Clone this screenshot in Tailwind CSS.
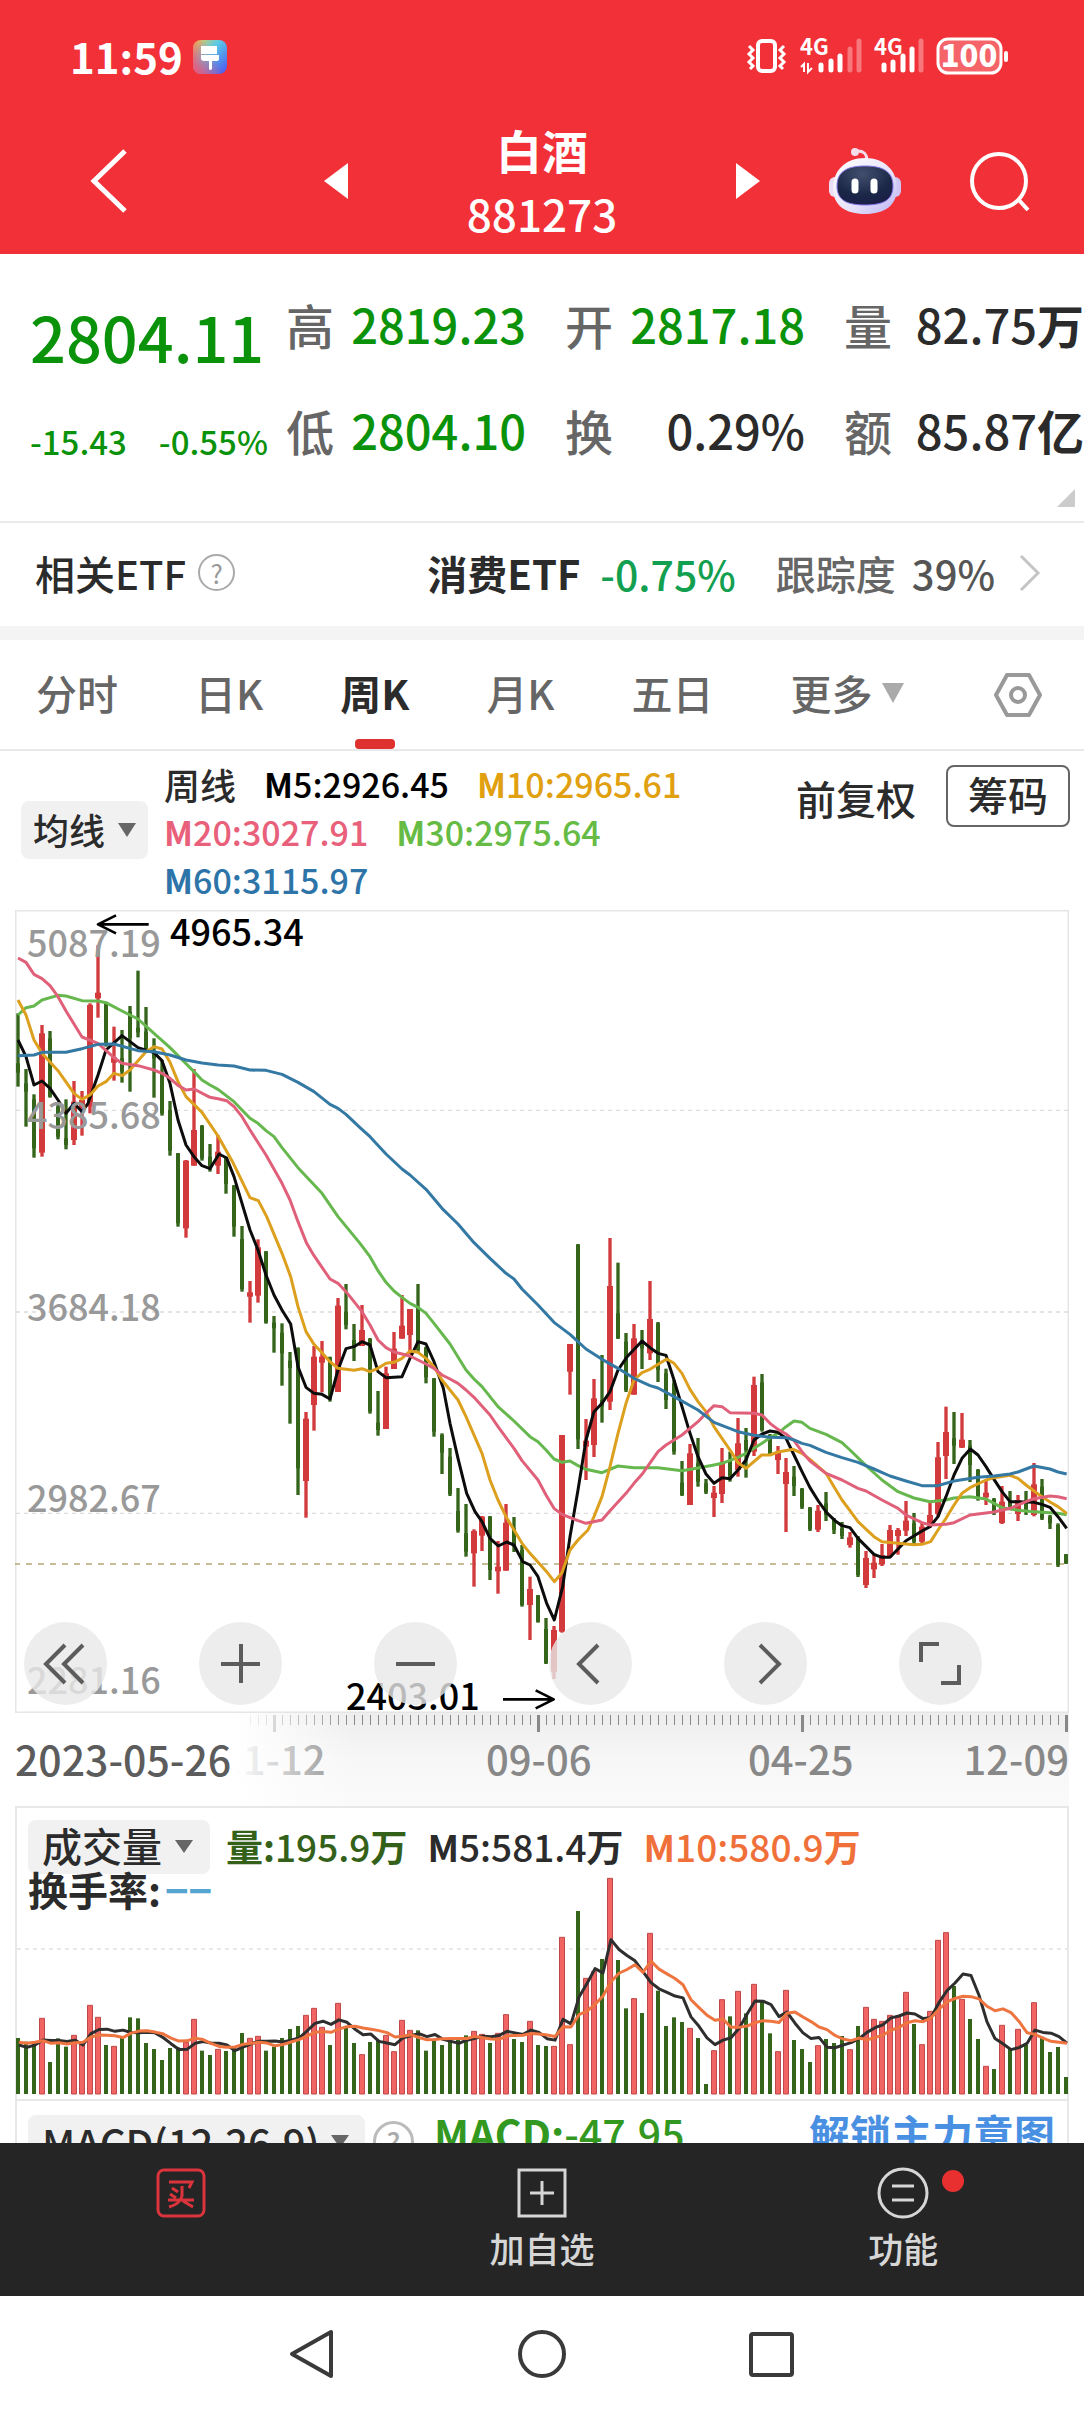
<!DOCTYPE html>
<html lang="zh-CN">
<head>
  <meta charset="UTF-8">
  <meta name="viewport" content="width=device-width, initial-scale=1">
  <title>白酒 881273</title>
  <script src="https://cdn.jsdelivr.net/npm/@tailwindcss/browser@4"></script>
</head>
<body class="h-screen flex flex-col overflow-hidden bg-white text-[#2b2b2b] font-['Noto_Sans_CJK_SC',sans-serif] font-medium">

  <!-- Header -->
  <header class="shrink-0 bg-[#f23037] text-white">
    <div class="h-[114px] flex items-center justify-between pl-[70px] pr-[74px]">
      <div class="flex items-center gap-[10px]">
        <span class="pb-[3px] text-[42px] leading-[48px] font-bold">11:59</span>
        <svg class="w-[34px] h-[34px]" viewBox="0 0 34 34">
          <defs>
            <linearGradient id="brush" x1="0" y1="0" x2="1" y2="1">
              <stop offset="0" stop-color="#ffc83a"/><stop offset=".4" stop-color="#5ccbe8"/><stop offset="1" stop-color="#4a50f0"/>
            </linearGradient>
            <linearGradient id="brush2" x1="0" y1="1" x2="1" y2=".4">
              <stop offset="0" stop-color="#ff4a6a"/><stop offset=".7" stop-color="#ff4a6a" stop-opacity="0"/>
            </linearGradient>
          </defs>
          <rect width="34" height="34" rx="8" fill="url(#brush)"/>
          <rect width="34" height="34" rx="8" fill="url(#brush2)"/>
          <path d="M8 6h16v8H8zM8 15h18v4q0 2-3 2h-4v8q-2 2-3 0v-8h-5q-3 0-3-3z" fill="#fff"/>
        </svg>
      </div>
      <svg class="w-[264px] h-[38px] overflow-visible" viewBox="0 0 264 38" fill="none" stroke="#fff" font-family="Noto Sans CJK SC">
        <!-- vibrate -->
        <rect x="12" y="3" width="17" height="30" rx="4" stroke-width="4"/>
        <path d="M3 8l4 4-4 4 4 4-4 4 4 4-3 3M38 8l-4 4 4 4-4 4 4 4-4 4 3 3" stroke-width="3"/>
        <!-- signal 1 -->
        <text x="54" y="17" font-size="22" font-weight="700" fill="#fff" stroke="none">4G</text>
        <path d="M58 34v-8l-3 3M62 25v9l4-4" stroke-width="2"/>
        <g stroke-width="5" stroke-linecap="round">
          <path d="M75 32v-5M85 32v-9M94 32V18"/>
          <path d="M104 32V11M113 32V3" opacity=".35"/>
        </g>
        <!-- signal 2 -->
        <text x="128" y="17" font-size="22" font-weight="700" fill="#fff" stroke="none">4G</text>
        <g stroke-width="5" stroke-linecap="round">
          <path d="M138 32v-5M147 32v-8M157 32V18M166 32V11"/>
          <path d="M175 32V3" opacity=".35"/>
        </g>
        <!-- battery -->
        <rect x="192" y="1" width="63" height="34" rx="10" fill="#fff" fill-opacity=".25" stroke-width="3"/>
        <path d="M260 15v7" stroke-width="4" stroke-linecap="round"/>
        <text x="223" y="29" font-size="31" font-weight="900" fill="#fff" stroke="none" text-anchor="middle">100</text>
      </svg>
    </div>

    <div class="h-[140px] pb-[6px] grid grid-cols-[1fr_436px_1fr] items-center">
      <button class="ml-[90px] w-[38px] h-[64px]" aria-label="返回">
        <svg viewBox="0 0 38 64" fill="none" stroke="#fff" stroke-width="5"><path d="M35 2L4 32l31 30"/></svg>
      </button>
      <div class="flex items-center justify-between">
        <button aria-label="上一个"><svg class="w-6 h-9" viewBox="0 0 24 36" fill="#fff"><path d="M24 0v36L0 18z"/></svg></button>
        <h1 class="text-center">
          <span class="block text-[46px] leading-[64px] font-bold">白酒</span>
          <span class="block text-[44px] leading-[64px]">881273</span>
        </h1>
        <button aria-label="下一个"><svg class="w-6 h-9" viewBox="0 0 24 36" fill="#fff"><path d="M0 0v36l24-18z"/></svg></button>
      </div>
      <div class="flex items-center justify-between pl-[69px] pr-[54px]">
        <button aria-label="智能助手">
          <svg class="w-[72px] h-[68px]" viewBox="0 0 72 68">
            <defs>
              <linearGradient id="shell" x1="0" y1="0" x2="1" y2="1">
                <stop offset="0" stop-color="#fff"/><stop offset=".6" stop-color="#e6e2fb"/><stop offset="1" stop-color="#b9b2f3"/>
              </linearGradient>
              <radialGradient id="face" cx=".45" cy=".2" r=".9">
                <stop offset="0" stop-color="#42506e"/><stop offset=".6" stop-color="#1b2747"/><stop offset="1" stop-color="#1a1c48"/>
              </radialGradient>
            </defs>
            <path d="M27 4q11-1 11 10" fill="none" stroke="#f6dcea" stroke-width="3"/>
            <circle cx="26" cy="5" r="4" fill="#f6dcea"/>
            <rect x="0" y="30" width="12" height="20" rx="6" fill="#ecdcf4"/>
            <rect x="60" y="30" width="12" height="20" rx="6" fill="#cfc6f5"/>
            <path d="M36 11c20 0 32 13 32 30S56 67 36 67 4 58 4 41 16 11 36 11z" fill="url(#shell)"/>
            <path d="M36 19c17 0 28 5 28 20 0 13-8 19-28 19S8 52 8 39c0-15 11-20 28-20z" fill="url(#face)" stroke="#8576e8" stroke-width="1"/>
            <path d="M26 35v8M45 35v8" stroke="#fff" stroke-width="7" stroke-linecap="round"/>
          </svg>
        </button>
        <button aria-label="搜索">
          <svg class="w-[60px] h-[60px]" viewBox="0 0 60 60" fill="none" stroke="#fff" stroke-width="4"><circle cx="29" cy="30" r="27"/><path d="M48 48l10 11"/></svg>
        </button>
      </div>
    </div>
  </header>

  <main class="flex-1 min-h-0 overflow-hidden">

    <!-- Quote -->
    <section class="relative h-[269px] pt-[41px] flex pl-[30px] border-b-2 border-[#ebebeb] whitespace-nowrap">
      <div class="w-[256px] text-[#0a920a]">
        <div class="h-[82px] text-[63px] leading-[82px]">2804.11</div>
        <div class="pt-[46px] flex gap-8 text-[33px] leading-[36px]"><span>-15.43</span><span>-0.55%</span></div>
      </div>
      <dl class="flex-1 grid grid-cols-3 gap-x-[39px] content-start text-[47px] leading-[58px] [&_dt]:text-[48px]">
        <div class="h-[106px] flex justify-between"><dt class="text-[#666]">高</dt><dd class="text-[#0a920a]">2819.23</dd></div>
        <div class="h-[106px] flex justify-between"><dt class="text-[#666]">开</dt><dd class="text-[#0a920a]">2817.18</dd></div>
        <div class="h-[106px] flex justify-between"><dt class="text-[#666]">量</dt><dd>82.75<b>万</b></dd></div>
        <div class="flex justify-between"><dt class="text-[#666]">低</dt><dd class="text-[#0a920a]">2804.10</dd></div>
        <div class="flex justify-between"><dt class="text-[#666]">换</dt><dd>0.29%</dd></div>
        <div class="flex justify-between"><dt class="text-[#666]">额</dt><dd>85.87<b>亿</b></dd></div>
      </dl>
      <svg class="absolute right-[9px] bottom-[14px] w-[18px] h-[18px]" viewBox="0 0 18 18" fill="#ccc"><path d="M18 0v18H0z"/></svg>
    </section>

    <!-- ETF -->
    <section class="h-[103px] pb-[4px] flex items-center pl-[35px] pr-[43px] text-[40px] leading-[58px] whitespace-nowrap">
      <span>相关ETF</span>
      <button class="ml-3 w-[37px] h-[37px] rounded-full border-2 border-[#aaa] text-[#999] text-[26px] leading-[32px] font-normal" aria-label="说明">?</button>
      <a href="#" class="ml-auto flex items-center">
        <b>消费ETF</b>
        <span class="ml-5 text-[41px] text-[#12a050]">-0.75%</span>
        <span class="ml-10 text-[#666]">跟踪度</span>
        <span class="ml-4 text-[#555]">39%</span>
        <svg class="ml-6 w-[22px] h-[38px]" viewBox="0 0 22 38" fill="none" stroke="#c4c4c4" stroke-width="3"><path d="M2 2l17 17L2 36"/></svg>
      </a>
    </section>
    <div class="h-[14px] bg-[#f4f4f4]"></div>

    <!-- Period tabs -->
    <nav class="h-[111px] flex items-center gap-[77px] pl-[36px] pr-[42px] border-b-2 border-[#e8e8e8] text-[41px] text-[#666] whitespace-nowrap">
      <button class="pb-1">分时</button>
      <button class="pb-1">日K</button>
      <button class="relative h-full pb-1 font-bold text-[#2b2b2b]">周K<span class="absolute left-1/2 -translate-x-1/2 bottom-0 w-10 h-[10px] rounded bg-[#e03131]"></span></button>
      <button class="pb-1">月K</button>
      <button class="pb-1">五日</button>
      <button class="pb-1 flex items-center gap-2">更多<svg class="w-[24px] h-[20px]" viewBox="0 0 24 20" fill="#aaa"><path d="M1 0h22L12 20z"/></svg></button>
      <button class="ml-auto" aria-label="设置">
        <svg class="w-[48px] h-[46px]" viewBox="0 0 48 46" fill="none" stroke="#999" stroke-width="4" stroke-linejoin="round"><path d="M13 3h22l11 20-11 20H13L2 23z"/><circle cx="24" cy="23" r="7"/></svg>
      </button>
    </nav>

    <!-- Averages -->
    <section class="h-[159px] flex pl-[21px] pr-[14px] whitespace-nowrap">
      <div class="relative mt-[50px] h-[58px]">
        <select aria-label="主图指标" class="appearance-none w-[127px] h-full pl-3 pb-[3px] rounded-lg bg-[#f1f1f1] text-[36px] leading-[50px]"><option>均线</option></select>
        <svg class="absolute right-3 top-[22px] w-[18px] h-[14px] pointer-events-none" viewBox="0 0 18 14" fill="#666"><path d="M0 0h18L9 14z"/></svg>
      </div>
      <div class="ml-4 mt-[9px] w-[560px] flex flex-wrap content-start gap-x-7 text-[34px] leading-[48px]">
        <span class="text-[36px]">周线</span>
        <span class="text-black"><b>M</b>5:2926.45</span>
        <span class="text-[#e0a010]"><b>M</b>10:2965.61</span>
        <span class="text-[#e8607a]"><b>M</b>20:3027.91</span>
        <span class="text-[#66bb44]"><b>M</b>30:2975.64</span>
        <span class="text-[#2d74a8]"><b>M</b>60:3115.97</span>
      </div>
      <button class="ml-auto mt-[18px] h-[58px] text-[40px] leading-[58px]">前复权</button>
      <button class="ml-[30px] mt-[14px] w-[124px] h-[62px] pb-1 rounded-lg border-2 border-[#666] text-[40px] leading-[54px]">筹码</button>
    </section>

    <div class="mx-[15px]">
      <!-- K line chart -->
      <section class="relative">
        <svg id="kline" class="block w-full" viewBox="45 30 3162 2409" fill="none" stroke-linejoin="round">
          <rect x="47" y="32" width="3158" height="2405" stroke="#e6e6e6" stroke-width="5"/>
          <path d="M48 631h3156M48 1236h3156M48 1840h3156" stroke="#dcdcdc" stroke-width="4" stroke-dasharray="12 12"/>
          <path d="M42 1992h3162" stroke="#b5a878" stroke-width="5" stroke-dasharray="18 18"/>
          <g id="candles"></g>
          <g id="averages" stroke-width="9"></g>
          <path d="M446 73H296M348 46L294 73l54 27M1509 2398h150M1607 2371l54 27-54 27" stroke="#000" stroke-width="8"/>
        </svg>
        <div class="absolute inset-0 text-[36px] leading-[40px] text-[#999]">
          <span class="absolute left-3 top-[11px]">5087.19</span>
          <span class="absolute left-3 top-[183px]">4385.68</span>
          <span class="absolute left-3 top-[375px]">3684.18</span>
          <span class="absolute left-3 top-[566px]">2982.67</span>
          <span class="absolute left-3 top-[748px]">2281.16</span>
          <span class="absolute left-[155px] top-0 text-black">4965.34</span>
          <span class="absolute left-[331px] top-[764px] text-black">2403.01</span>
        </div>
        <div class="absolute left-[9px] bottom-[8px] flex gap-[92px] [&>button]:w-[83px] [&>button]:h-[83px] [&>button]:rounded-full [&>button]:bg-[#e8e8e8]/80">
          <button aria-label="最早"><svg viewBox="0 0 83 83" fill="none" stroke="#5c5c5c" stroke-width="4"><path d="M41 23L22 42l19 19M59 23L40 42l19 19"/></svg></button>
          <button aria-label="放大"><svg viewBox="0 0 83 83" fill="none" stroke="#5c5c5c" stroke-width="4"><path d="M22 42h39M42 22v39"/></svg></button>
          <button aria-label="缩小"><svg viewBox="0 0 83 83" fill="none" stroke="#5c5c5c" stroke-width="4"><path d="M22 42h39"/></svg></button>
          <button aria-label="左移"><svg viewBox="0 0 83 83" fill="none" stroke="#5c5c5c" stroke-width="4"><path d="M49 23L30 42l19 19"/></svg></button>
          <button aria-label="右移"><svg viewBox="0 0 83 83" fill="none" stroke="#5c5c5c" stroke-width="4"><path d="M36 23l19 19-19 19"/></svg></button>
          <button aria-label="全屏"><svg viewBox="0 0 83 83" fill="none" stroke="#5c5c5c" stroke-width="4"><path d="M40 22H22v18M42 61h18V43"/></svg></button>
        </div>
      </section>

      <!-- Date ruler -->
      <section class="relative h-[93px] bg-linear-to-b from-[#ededed] via-[#f7f7f7] to-[#fafafa] text-[40px] leading-[48px] text-[#888]">
        <svg id="ruler" class="block w-full" viewBox="0 0 1054 20"></svg>
        <span class="absolute left-[205px] top-[21px]">11-12</span>
        <span class="absolute left-[471px] top-[21px]">09-06</span>
        <span class="absolute left-[733px] top-[21px]">04-25</span>
        <span class="absolute right-0 top-[21px]">12-09</span>
        <div class="absolute inset-y-0 left-0 w-[340px] bg-linear-to-r from-white from-65% to-white/0"></div>
        <span class="absolute left-0 top-[21px] text-[41px] text-[#5c5c5c]">2023-05-26</span>
      </section>

      <!-- Volume -->
      <section class="relative h-[295px] border-2 border-[#e8e8e8] whitespace-nowrap">
        <svg id="volume" class="absolute -left-[2px] -top-[2px] w-[calc(100%+4px)] max-w-none" viewBox="0 0 1054 295" fill="none" stroke-linejoin="round">
          <path d="M2 143h1050" stroke="#d4d4d4" stroke-width="1" stroke-dasharray="4 4"/>
          <g id="bars"></g>
          <g id="volumeAverages" stroke-width="3"></g>
        </svg>
        <div class="relative pt-[11px] pl-[11px] flex items-center text-[37px] leading-[54px]">
          <div class="relative h-[54px]">
            <select aria-label="副图指标" class="appearance-none w-[182px] h-full pl-[14px] pb-[3px] rounded-lg bg-[#f1f1f1] text-[40px] leading-[50px]"><option>成交量</option></select>
            <svg class="absolute right-[17px] top-[21px] w-[18px] h-[13px] pointer-events-none" viewBox="0 0 18 13" fill="#666"><path d="M0 0h18L9 13z"/></svg>
          </div>
          <span class="ml-4 text-[#33611a]"><b>量:</b>195.9<b>万</b></span>
          <span class="ml-5"><b>M</b>5:581.4<b>万</b></span>
          <span class="ml-5 text-[#f0703a]"><b>M</b>10:580.9<b>万</b></span>
        </div>
        <div class="relative pl-[11px] flex items-center text-[40px] leading-[32px] font-bold">换手率:<span class="ml-1 text-[#55a5d0]">−−</span></div>
      </section>

      <!-- MACD -->
      <section class="h-[120px] pt-[13px] pl-[11px] pr-[12px] flex items-start border-x-2 border-[#e8e8e8] text-[41px] leading-[54px] whitespace-nowrap">
        <div class="relative h-[54px]">
          <select aria-label="MACD 参数" class="appearance-none w-[337px] h-full pl-[14px] rounded-lg bg-[#f1f1f1] text-[40px] leading-[50px]"><option>MACD(12,26,9)</option></select>
          <svg class="absolute right-[16px] top-[21px] w-[18px] h-[13px] pointer-events-none" viewBox="0 0 18 13" fill="#666"><path d="M0 0h18L9 13z"/></svg>
        </div>
        <button class="ml-2 mt-[7px] w-[41px] h-[41px] rounded-full border-3 border-[#bbb] text-[#aaa] text-[28px] leading-[34px]" aria-label="说明">?</button>
        <span class="ml-5 -mt-[9px] text-[#33981f]"><b>MACD:</b>-47.95</span>
        <a href="#" class="ml-auto -mt-[9px] font-bold text-[#4a90e2]">解锁主力意图</a>
      </section>
    </div>
  </main>

  <!-- Trade bar -->
  <nav class="relative z-10 shrink-0 h-[153px] pt-[24px] grid grid-cols-3 bg-[#252525] text-[#d6d6d6] text-[35px] leading-[50px]">
    <button class="flex flex-col items-center gap-[4px]" aria-label="买">
      <svg class="w-[52px] h-[52px]" viewBox="0 0 52 52" fill="none" stroke="#dc343c" stroke-width="3">
        <rect x="3" y="3" width="46" height="46" rx="6"/>
        <path d="M14 15h23l-3 6M17 21l6 4M15 27l6 4M13 33h26M27 19v10q-2 8-13 11M28 34l10 6"/>
      </svg>
    </button>
    <button class="flex flex-col items-center gap-[4px]">
      <svg class="w-[52px] h-[52px]" viewBox="0 0 52 52" fill="none" stroke="#d6d6d6" stroke-width="3"><path d="M3 3h46v46H3zM14 26h24M26 14v24"/></svg>
      加自选
    </button>
    <button class="flex flex-col items-center gap-[4px]">
      <span class="relative h-[52px]">
        <svg class="w-[52px] h-[52px]" viewBox="0 0 52 52" fill="none" stroke="#d6d6d6" stroke-width="3"><circle cx="26" cy="26" r="24"/><path d="M15 19h22M15 33h22"/></svg>
        <span class="absolute -right-[35px] top-[3px] w-[22px] h-[22px] rounded-full bg-[#e83030]"></span>
      </span>
      功能
    </button>
  </nav>

  <!-- System keys -->
  <footer class="shrink-0 h-[116px] flex items-center justify-center gap-[181px] bg-white">
    <button aria-label="后退"><svg class="w-[48px] h-[50px]" viewBox="0 0 48 50" fill="none" stroke="#3a3a3a" stroke-width="4" stroke-linejoin="round"><path d="M43 3v44L4 25z"/></svg></button>
    <button aria-label="主页"><svg class="w-[50px] h-[50px]" viewBox="0 0 50 50" fill="none" stroke="#3a3a3a" stroke-width="4"><circle cx="25" cy="25" r="22"/></svg></button>
    <button aria-label="最近任务"><svg class="w-[48px] h-[50px]" viewBox="0 0 48 50" fill="none" stroke="#3a3a3a" stroke-width="4"><rect x="3" y="5" width="41" height="41" rx="2"/></svg></button>
  </footer>

  <script>
    // Weekly candles in chart units: colour, high, body top, body bottom, low
    const candles = `g340,490,518,560 g507,550,575,680 g583,598,745,773 r375,400,758,770 g393,415,590,593 g610,620,710,718
      g598,715,735,748 r543,605,720,735 r573,600,630,707 r310,315,620,640 r136,278,295,353 g308,312,430,440
      r380,472,488,542 g390,475,515,548 g318,335,415,575 g212,383,397,412 g321,395,445,450 g415,455,475,593
      g480,520,640,647 g603,630,752,767 g759,760,970,980 r780,782,985,1013 r507,690,797,797 g675,678,775,782
      g732,770,800,815 r706,755,797,822 g770,775,852,881 g855,857,980,1010 g978,1017,1167,1175 r1143,1177,1190,1268
      r1018,1042,1187,1208 g1053,1055,1268,1271 g1248,1268,1285,1358 g1270,1298,1360,1457 g1356,1382,1404,1571 g1342,1345,1705,1785
      r1536,1556,1743,1853 r1338,1370,1515,1592 r1323,1370,1388,1477 g1370,1372,1490,1505 r1194,1217,1476,1476 g1152,1235,1275,1288
      g1272,1320,1340,1383 r1215,1290,1338,1338 g1314,1317,1535,1541 g1473,1568,1590,1607 r1400,1420,1587,1587 r1296,1346,1407,1407
      r1185,1277,1316,1316 r1227,1227,1305,1362 g1152,1220,1350,1356 g1340,1343,1432,1450 g1434,1436,1595,1610 g1600,1605,1658,1722
      g1644,1670,1782,1788 g1764,1833,1892,1898 g1812,1900,1955,1970 r1888,1893,1960,2060 r1848,1850,1907,1953 g1848,1850,2010,2040
      r1923,2000,2014,2081 r1812,1868,2012,2012 g1851,1885,1940,1956 g1935,1950,2115,2120 r2030,2067,2115,2220 g2085,2086,2166,2168
      g2154,2187,2290,2292 r2178,2190,2315,2337 r1605,1605,2195,2198 r1332,1332,1415,1484 g1032,1034,1618,1647 r1557,1622,1640,1740
      r1437,1495,1635,1671 g1365,1500,1520,1568 r1014,1158,1505,1530 g1088,1240,1315,1317 g1299,1325,1470,1476 r1272,1315,1484,1484
      g1290,1330,1345,1407 r1143,1257,1360,1380 g1266,1270,1410,1446 g1406,1420,1500,1527 g1440,1450,1655,1664 g1683,1748,1785,1788
      r1632,1660,1815,1815 g1614,1690,1745,1760 g1737,1750,1777,1782 r1758,1778,1794,1851 r1644,1690,1782,1809 g1655,1680,1730,1745
      r1554,1630,1710,1730 g1584,1620,1650,1733 r1430,1455,1655,1668 g1422,1447,1590,1595 g1602,1605,1662,1664 r1638,1655,1680,1722
      r1674,1716,1752,1896 g1698,1730,1758,1788 g1764,1767,1822,1827 g1821,1823,1888,1893 r1815,1832,1889,1896 g1776,1810,1845,1863
      g1854,1860,1890,1902 g1866,1885,1908,1917 r1896,1912,1935,1943 g1908,1912,2025,2031 r1953,1974,2055,2064 r1965,1988,2008,2034
      r1932,1965,1993,1998 r1875,1890,1968,1974 r1884,1890,1908,1964 r1803,1862,1892,1908 g1839,1870,1925,1932 r1866,1880,1925,1934
      r1809,1845,1875,1884 r1626,1672,1842,1850 r1520,1596,1668,1737 g1536,1615,1637,1692 r1539,1619,1643,1644 g1620,1637,1695,1746
      g1707,1710,1792,1802 r1740,1778,1792,1815 g1794,1797,1840,1845 r1758,1805,1869,1872 g1773,1800,1820,1830 r1785,1800,1842,1863
      g1773,1800,1830,1845 r1689,1753,1845,1849 g1737,1760,1855,1860 g1845,1850,1870,1887 g1870,1875,1995,2001 g1962,1963,1990,1992`
      .trim().split(/\s+/).map(s => ({ up: s[0] === 'r', v: s.slice(1).split(',').map(Number) }));

    document.getElementById('candles').innerHTML = candles.map(({ up, v: [high, top, bottom, low] }, i) => {
      const x = 54 + i * 24;
      const w = up ? 18 : 12;
      const color = up ? '#d23a3c' : '#35641b';
      return `<rect x="${x - 5}" y="${high}" width="10" height="${low - high}" fill="${color}"/>
        <rect x="${x - w / 2}" y="${top}" width="${w}" height="${bottom - top}" fill="${color}"/>`;
    }).join('');

    // Moving averages
    const averages = {
      '#66b84e': '54,345 78,323 102,318 126,300 174,286 198,288 246,302 294,303 318,308 366,333 414,357 462,400 510,443 582,515 606,540 630,555 654,568 702,605 750,655 774,670 798,692 822,710 846,743 894,803 966,880 1014,950 1080,1030 1110,1070 1134,1112 1158,1147 1182,1173 1206,1192 1230,1210 1254,1222 1278,1240 1302,1270 1350,1332 1398,1410 1422,1437 1446,1460 1470,1490 1494,1520 1542,1563 1590,1610 1614,1625 1638,1650 1662,1677 1686,1687 1710,1683 1734,1697 1758,1708 1806,1718 1854,1698 1902,1703 1974,1703 2046,1712 2094,1704 2142,1695 2166,1690 2214,1672 2238,1660 2286,1630 2310,1613 2334,1600 2358,1580 2382,1563 2406,1567 2430,1585 2478,1603 2526,1628 2550,1650 2598,1697 2646,1740 2694,1775 2742,1794 2790,1805 2838,1800 2862,1794 2910,1790 2958,1797 2982,1810 3006,1823 3054,1831 3102,1835 3174,1840 3200,1844',
      '#0c0c0c': '54,420 78,470 102,555 126,543 150,565 174,600 198,640 222,610 246,635 264,610 294,525 318,450 366,407 414,443 462,458 486,482 510,550 534,660 558,735 582,770 606,797 630,806 657,762 680,774 702,830 726,910 750,990 774,1050 798,1125 822,1185 846,1230 872,1272 894,1400 918,1462 942,1480 966,1483 990,1497 1014,1410 1038,1346 1062,1340 1086,1325 1110,1335 1134,1415 1158,1433 1206,1430 1230,1375 1254,1325 1278,1332 1302,1385 1330,1465 1350,1570 1374,1675 1400,1780 1425,1835 1446,1865 1470,1915 1495,1938 1520,1926 1542,1935 1568,1985 1590,1995 1614,2030 1640,2110 1663,2160 1688,2060 1710,1910 1734,1770 1758,1620 1782,1535 1806,1510 1830,1475 1854,1410 1880,1372 1926,1323 1950,1343 1974,1360 1998,1366 2022,1440 2046,1520 2070,1600 2094,1670 2118,1722 2142,1750 2166,1733 2190,1736 2214,1710 2238,1680 2262,1620 2286,1602 2310,1593 2334,1597 2358,1615 2382,1665 2406,1715 2430,1763 2455,1803 2480,1838 2505,1862 2526,1877 2550,1883 2574,1915 2622,1963 2646,1972 2670,1972 2718,1922 2766,1893 2790,1880 2814,1850 2838,1790 2862,1725 2886,1675 2911,1647 2934,1665 2958,1700 2982,1738 3006,1775 3030,1805 3078,1806 3102,1807 3126,1813 3150,1822 3174,1850 3200,1885',
      '#dca01e': '54,300 78,345 102,420 126,460 174,512 222,580 246,598 270,585 294,558 318,545 342,520 366,527 390,510 414,482 438,455 462,440 486,447 510,487 534,545 558,590 606,637 654,708 700,790 750,893 775,902 800,950 846,1060 872,1130 894,1220 918,1295 942,1333 966,1358 990,1385 1014,1405 1062,1411 1086,1406 1110,1415 1134,1405 1158,1390 1182,1387 1206,1375 1230,1353 1254,1357 1278,1375 1302,1400 1326,1440 1374,1500 1398,1550 1446,1660 1470,1740 1494,1800 1518,1850 1566,1930 1590,1960 1640,2015 1663,2045 1686,2018 1710,1950 1734,1920 1764,1890 1782,1850 1806,1790 1830,1700 1854,1600 1878,1510 1902,1440 1926,1418 1950,1408 2000,1377 2022,1390 2046,1420 2070,1468 2094,1505 2118,1535 2142,1580 2166,1615 2190,1650 2214,1688 2238,1705 2285,1665 2310,1665 2334,1656 2380,1648 2406,1660 2430,1678 2478,1720 2502,1760 2526,1800 2550,1832 2574,1865 2622,1910 2646,1925 2694,1930 2742,1934 2766,1933 2792,1925 2814,1890 2838,1855 2862,1815 2886,1780 2910,1763 2958,1740 2982,1733 3030,1726 3054,1735 3078,1755 3102,1773 3126,1790 3150,1806 3174,1820 3200,1840',
      '#e0607a': '54,174 78,187 102,223 126,236 150,257 174,290 198,333 246,411 294,430 342,473 366,490 414,497 462,510 486,520 510,535 534,556 558,570 582,567 630,592 654,596 680,602 702,620 726,650 750,690 798,765 846,850 870,900 894,965 920,1030 942,1067 990,1137 1014,1150 1038,1175 1086,1235 1110,1275 1134,1320 1158,1343 1182,1356 1230,1368 1278,1392 1302,1405 1326,1425 1350,1437 1374,1450 1398,1470 1422,1492 1470,1545 1494,1580 1542,1645 1566,1682 1614,1740 1638,1785 1662,1825 1686,1843 1734,1862 1758,1870 1806,1860 1830,1832 1878,1780 1902,1750 1926,1723 1974,1655 1998,1635 2046,1605 2094,1565 2118,1540 2142,1517 2166,1520 2190,1538 2262,1540 2286,1545 2310,1570 2334,1588 2358,1602 2382,1622 2406,1655 2430,1683 2478,1720 2526,1740 2574,1765 2598,1773 2646,1800 2694,1825 2718,1845 2766,1868 2790,1875 2838,1873 2862,1868 2910,1845 2982,1836 3030,1825 3078,1805 3102,1796 3150,1788 3174,1790 3200,1796',
      '#3478a4': '54,467 102,465 126,457 198,457 246,446 294,433 342,432 414,452 462,455 510,465 558,480 606,489 654,495 702,498 750,510 798,511 846,523 894,547 942,575 990,613 1014,625 1038,643 1080,683 1110,710 1158,762 1206,807 1230,825 1278,868 1326,925 1374,972 1422,1028 1470,1075 1518,1120 1542,1137 1566,1167 1614,1215 1662,1267 1710,1303 1758,1347 1806,1378 1854,1405 1902,1435 1950,1457 1974,1464 2022,1490 2094,1530 2142,1567 2214,1595 2262,1606 2310,1612 2358,1613 2382,1620 2406,1630 2430,1636 2478,1657 2526,1673 2574,1687 2622,1707 2670,1728 2718,1743 2766,1757 2814,1757 2862,1743 2934,1732 2982,1728 3030,1722 3054,1716 3102,1698 3150,1707 3174,1716 3200,1722'
    };
    document.getElementById('averages').innerHTML = Object.entries(averages)
      .map(([color, points]) => `<polyline points="${points}" stroke="${color}"/>`).join('');

    // Date ruler
    let ticks = '';
    for (let x = 235; x < 1054; x += 8) {
      const major = (x - 259) % 264 === 0;
      ticks += `<rect x="${major ? x - 1 : x}" y="2" width="${major ? 3 : 1}" height="${major ? 17 : 10}" fill="#888"/>`;
    }
    document.getElementById('ruler').innerHTML = ticks;

    // Volume, same weeks and colours as the candles
    const volume = [744,755,757,685,816,745,770,736,758,646,682,765,769,740,682,685,759,777,810,774,772,757,688,782,795,778,783,772,729,745,739,782,770,744,717,708,676,655,712,765,640,712,759,794,756,750,736,785,691,721,721,782,752,765,750,750,736,724,733,759,730,674,747,756,694,765,768,769,442,764,363,565,545,507,265,510,655,626,669,430,602,708,682,696,715,744,882,782,629,679,604,670,583,632,730,785,601,750,777,816,767,747,759,738,779,708,652,688,694,676,680,607,702,764,664,451,428,588,628,687,747,829,837,706,775,718,765,638,740,786,771,861]
      .map(v => (912 - v) / 3);
    const base = 288;
    document.getElementById('bars').innerHTML = volume.map((h, i) => {
      const x = 3 + i * 8;
      return candles[i].up
        ? `<rect x="${x - 2.5}" y="${base - h}" width="5" height="${h}" fill="#f06464" stroke="#c04848"/>`
        : `<rect x="${x - 2}" y="${base - h}" width="4" height="${h}" fill="#35641b"/>`;
    }).join('');

    function movingAverage(head, n) {
      return volume.map((_, i) => {
        const h = i < n - 1 ? (912 - head[i]) / 3 : volume.slice(i - n + 1, i + 1).reduce((a, b) => a + b) / n;
        return `${4 + i * 8},${base - h}`;
      }).join(' ');
    }
    document.getElementById('volumeAverages').innerHTML =
      `<polyline points="${movingAverage([765, 772, 765, 750], 5)}" stroke="#2e2e2e"/>
       <polyline points="${movingAverage([757, 760, 757, 752, 760, 758, 762, 758, 757], 10)}" stroke="#ee7440"/>`;
  </script>
</body>
</html>
